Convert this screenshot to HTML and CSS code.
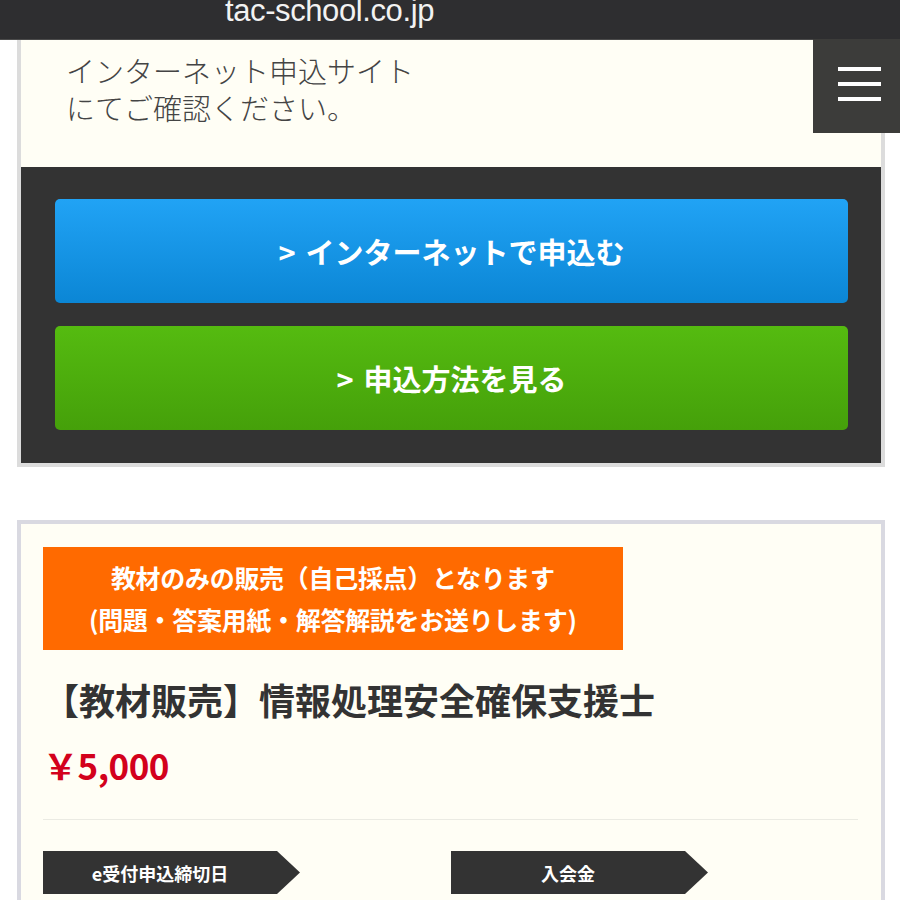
FILE: index.html
```html
<!DOCTYPE html>
<html lang="ja">
<head>
<meta charset="utf-8">
<title>tac-school.co.jp</title>
<link rel="stylesheet" href="styles.css">
</head>
<body>
<header class="topbar">
  <div class="url">tac-school.co.jp</div>
</header>
<button class="menu" aria-label="メニュー">
  <span class="menu-line"></span>
  <span class="menu-line"></span>
  <span class="menu-line"></span>
</button>
<main class="page">
  <section class="card card-apply">
    <p class="apply-note">インターネット申込サイト<br>にてご確認ください。</p>
    <div class="apply-actions">
      <a class="btn btn-blue" href="#"><span class="chev">&gt;</span>インターネットで申込む</a>
      <a class="btn btn-green" href="#"><span class="chev">&gt;</span>申込方法を見る</a>
    </div>
  </section>

  <section class="card card-product">
    <div class="notice">教材のみの販売（自己採点）となります<br>(問題・答案用紙・解答解説をお送りします)</div>
    <h1 class="title">【教材販売】情報処理安全確保支援士</h1>
    <div class="price">￥5,000</div>
    <hr class="divider">
    <div class="tags">
      <div class="tag">e受付申込締切日</div>
      <div class="tag">入会金</div>
    </div>
  </section>
</main>
</body>
</html>
```
FILE: styles.css
```css
html, body {
  margin: 0;
  padding: 0;
  background: #ffffff;
  font-family: "Noto Sans CJK JP", "Noto Sans", sans-serif;
}

.topbar {
  height: 39px;
  background: #2e2e30;
  border-bottom: 1px solid #4a4a4a;
  overflow: hidden;
}

.url {
  padding-left: 225px;
  margin-top: -9px;
  font-family: "Liberation Sans", Arial, sans-serif;
  font-size: 31px;
  line-height: 40px;
  color: #f2f2f2;
  letter-spacing: -0.4px;
}

.menu {
  position: absolute;
  top: 39px;
  right: 0;
  width: 87px;
  height: 94px;
  background: #3c3c3a;
  border: none;
  padding: 28px 0 0 25px;
  display: flex;
  flex-direction: column;
  gap: 11px;
  box-sizing: border-box;
}

.menu-line {
  display: block;
  width: 43px;
  height: 4px;
  background: #ffffff;
}

.page {
  width: 868px;
  margin-left: 17px;
  display: flex;
  flex-direction: column;
  gap: 53px;
  padding-bottom: 40px;
}

.card {
  background: #fffef5;
  border: 4px solid #dcdcdc;
}

.card-apply {
  border-top: none;
}

.apply-note {
  margin: 0;
  padding: 12px 0 41px 45px;
  font-size: 29px;
  line-height: 37px;
  font-weight: 300;
  color: #444444;
}

.apply-actions {
  background: #333333;
  padding: 32px 33px 33px 34px;
  display: flex;
  flex-direction: column;
  gap: 23px;
}

.btn {
  display: flex;
  align-items: center;
  justify-content: center;
  height: 104px;
  border-radius: 5px;
  color: #ffffff;
  font-size: 29px;
  font-weight: 700;
  text-decoration: none;
}

.chev {
  margin-right: 10px;
}

.btn-blue {
  background: linear-gradient(#21a3f5, #0b86d5);
}

.btn-green {
  background: linear-gradient(#55bb10, #45a00a);
}

.card-product {
  border-color: #d9d9e1;
  padding: 23px 23px 40px 22px;
}

.notice {
  display: inline-block;
  background: #ff6a00;
  color: #ffffff;
  font-weight: 700;
  font-size: 25px;
  line-height: 42px;
  text-align: center;
  padding: 9px 46px 10px 46px;
  letter-spacing: -0.3px;
}

.title {
  margin: 24px 0 0 0;
  font-size: 36px;
  line-height: 50px;
  font-weight: 700;
  color: #333333;
}

.price {
  margin-top: 16px;
  font-size: 35px;
  line-height: 50px;
  font-weight: 700;
  color: #d3011c;
  letter-spacing: -0.5px;
}

.divider {
  margin: 29px 0 0 0;
  border: none;
  border-top: 1px solid #ebebe3;
}

.tags {
  margin-top: 31px;
  display: grid;
  grid-template-columns: 408px 1fr;
}

.tag {
  width: 257px;
  height: 43px;
  box-sizing: border-box;
  padding-right: 23px;
  background: #333333;
  color: #ffffff;
  font-size: 18px;
  font-weight: 700;
  display: flex;
  align-items: center;
  justify-content: center;
  clip-path: polygon(0 0, 234px 0, 257px 50%, 234px 100%, 0 100%);
}
```
